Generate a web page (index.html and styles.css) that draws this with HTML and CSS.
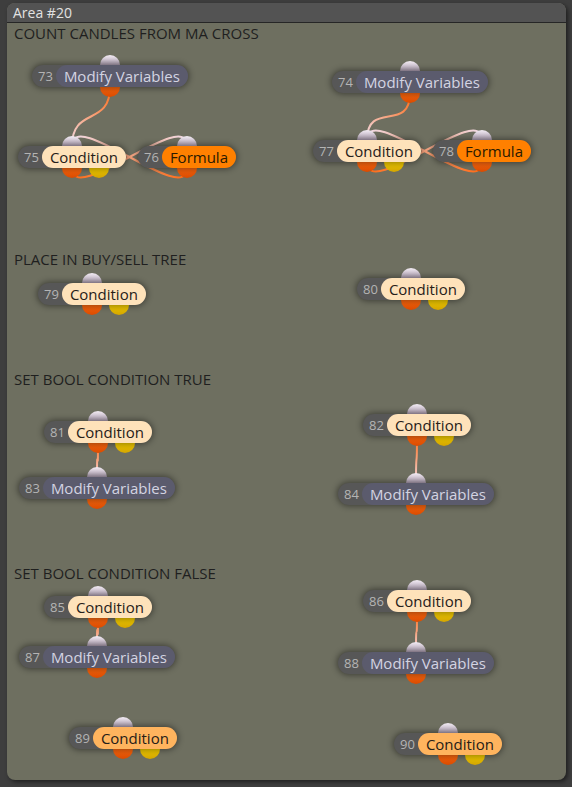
FILE: index.html
```html
<!DOCTYPE html>
<html lang="en">
<head>
  <meta charset="UTF-8">
  <meta name="viewport" content="width=device-width, initial-scale=1.0">
  <title>Area #20</title>
  <link rel="stylesheet" href="styles.css">
</head>
<body>
  <div class="area">
    <div class="area-title">Area #20</div>

    <!-- Node canvas -->
    <div class="canvas" id="canvas">
      <svg class="links" id="links" width="559" height="757"></svg>

      <div class="comment" style="top:0px">COUNT CANDLES FROM MA CROSS</div>
      <div class="comment" style="top:226px">PLACE IN BUY/SELL TREE</div>
      <div class="comment" style="top:346px">SET BOOL CONDITION TRUE</div>
      <div class="comment" style="top:540px">SET BOOL CONDITION FALSE</div>

      <div class="node" data-id="73" style="left:25px;top:42px">
        <div class="pill"><span class="node-id">73</span><span class="node-name modify">Modify Variables</span></div>
        <i class="port in"></i><i class="port out"></i>
      </div>
      <div class="node" data-id="74" style="left:325px;top:48px">
        <div class="pill"><span class="node-id">74</span><span class="node-name modify">Modify Variables</span></div>
        <i class="port in"></i><i class="port out"></i>
      </div>
      <div class="node" data-id="75" style="left:11px;top:123px">
        <div class="pill"><span class="node-id">75</span><span class="node-name condition">Condition</span></div>
        <i class="port in"></i><i class="port out"></i><i class="port out2"></i>
      </div>
      <div class="node" data-id="76" style="left:131px;top:123px">
        <div class="pill"><span class="node-id">76</span><span class="node-name formula">Formula</span></div>
        <i class="port in"></i><i class="port out"></i>
      </div>
      <div class="node" data-id="77" style="left:306px;top:117px">
        <div class="pill"><span class="node-id">77</span><span class="node-name condition">Condition</span></div>
        <i class="port in"></i><i class="port out"></i><i class="port out2"></i>
      </div>
      <div class="node" data-id="78" style="left:426px;top:117px">
        <div class="pill"><span class="node-id">78</span><span class="node-name formula">Formula</span></div>
        <i class="port in"></i><i class="port out"></i>
      </div>

      <div class="node" data-id="79" style="left:31px;top:260px">
        <div class="pill"><span class="node-id">79</span><span class="node-name condition">Condition</span></div>
        <i class="port in"></i><i class="port out"></i><i class="port out2"></i>
      </div>
      <div class="node" data-id="80" style="left:350px;top:255px">
        <div class="pill"><span class="node-id">80</span><span class="node-name condition">Condition</span></div>
        <i class="port in"></i><i class="port out"></i><i class="port out2"></i>
      </div>

      <div class="node" data-id="81" style="left:37px;top:398px">
        <div class="pill"><span class="node-id">81</span><span class="node-name condition">Condition</span></div>
        <i class="port in"></i><i class="port out"></i><i class="port out2"></i>
      </div>
      <div class="node" data-id="82" style="left:356px;top:391px">
        <div class="pill"><span class="node-id">82</span><span class="node-name condition">Condition</span></div>
        <i class="port in"></i><i class="port out"></i><i class="port out2"></i>
      </div>
      <div class="node" data-id="83" style="left:12px;top:454px">
        <div class="pill"><span class="node-id">83</span><span class="node-name modify">Modify Variables</span></div>
        <i class="port in"></i><i class="port out"></i>
      </div>
      <div class="node" data-id="84" style="left:331px;top:460px">
        <div class="pill"><span class="node-id">84</span><span class="node-name modify">Modify Variables</span></div>
        <i class="port in"></i><i class="port out"></i>
      </div>

      <div class="node" data-id="85" style="left:37px;top:573px">
        <div class="pill"><span class="node-id">85</span><span class="node-name condition">Condition</span></div>
        <i class="port in"></i><i class="port out"></i><i class="port out2"></i>
      </div>
      <div class="node" data-id="86" style="left:356px;top:567px">
        <div class="pill"><span class="node-id">86</span><span class="node-name condition">Condition</span></div>
        <i class="port in"></i><i class="port out"></i><i class="port out2"></i>
      </div>
      <div class="node" data-id="87" style="left:12px;top:623px">
        <div class="pill"><span class="node-id">87</span><span class="node-name modify">Modify Variables</span></div>
        <i class="port in"></i><i class="port out"></i>
      </div>
      <div class="node" data-id="88" style="left:331px;top:629px">
        <div class="pill"><span class="node-id">88</span><span class="node-name modify">Modify Variables</span></div>
        <i class="port in"></i><i class="port out"></i>
      </div>

      <div class="node" data-id="89" style="left:62px;top:704px">
        <div class="pill"><span class="node-id">89</span><span class="node-name condition selected">Condition</span></div>
        <i class="port in"></i><i class="port out"></i><i class="port out2"></i>
      </div>
      <div class="node" data-id="90" style="left:387px;top:710px">
        <div class="pill"><span class="node-id">90</span><span class="node-name condition selected">Condition</span></div>
        <i class="port in"></i><i class="port out"></i><i class="port out2"></i>
      </div>
    </div>
  </div>

  <script>
    // output node -> input node
    const links = [
      [73, 75], [75, 76], [76, 75],
      [74, 77], [77, 78], [78, 77],
      [81, 83], [82, 84],
      [85, 87], [86, 88]
    ];
    const svgNS = "http://www.w3.org/2000/svg";
    const svg = document.getElementById("links");
    const defs = document.createElementNS(svgNS, "defs");
    svg.appendChild(defs);

    function nodeBox(id) {
      const el = document.querySelector(`.node[data-id="${id}"]`);
      return {
        x: el.offsetLeft + el.offsetWidth / 2,
        top: el.offsetTop,
        bottom: el.offsetTop + el.offsetHeight
      };
    }

    links.forEach(([from, to], i) => {
      const a = nodeBox(from);
      const b = nodeBox(to);
      const x1 = a.x, y1 = a.bottom, x2 = b.x, y2 = b.top;
      const bend = 40;

      // orange at the output end, lilac at the input end
      const grad = document.createElementNS(svgNS, "linearGradient");
      grad.setAttribute("id", `link${i}`);
      grad.setAttribute("gradientUnits", "userSpaceOnUse");
      grad.setAttribute("x1", x1);
      grad.setAttribute("y1", y1);
      grad.setAttribute("x2", x2);
      grad.setAttribute("y2", y2);
      grad.innerHTML = '<stop offset="0" stop-color="#ff6a14"/><stop offset="1" stop-color="#f0dbe6"/>';
      defs.appendChild(grad);

      const path = document.createElementNS(svgNS, "path");
      path.setAttribute("d", `M ${x1} ${y1} C ${x1} ${y1 + bend}, ${x2} ${y2 - bend}, ${x2} ${y2}`);
      path.setAttribute("stroke", `url(#link${i})`);
      svg.appendChild(path);
    });
  </script>
</body>
</html>
```

FILE: styles.css
```css
body {
  margin: 0;
  padding: 3px 6px 7px 7px;
  background: #3e3e3e;
  font-family: "Open Sans", "Noto Sans", sans-serif;
}

/* Area frame */
.area {
  height: 777px;
  display: flex;
  flex-direction: column;
  background: #6e6f60;
  border-radius: 8px;
  overflow: hidden;
  box-shadow: 2px 2px 4px rgba(0, 0, 0, 0.5);
}

.area-title {
  height: 19px;
  line-height: 19px;
  padding-left: 6px;
  font-size: 14px;
  color: #e2e2e2;
  background: #535353;
  border-bottom: 1px solid #262626;
}

.canvas {
  position: relative;
  flex: 1;
}

.links {
  position: absolute;
  left: 0;
  top: 0;
}

.links path {
  fill: none;
  stroke-width: 2;
}

/* Comments on the canvas */
.comment {
  position: absolute;
  left: 7px;
  font-size: 15px;
  line-height: 20px;
  color: #1f1f1f;
}

/* Nodes */
.node {
  position: absolute;
}

.pill {
  position: relative;
  z-index: 1;
  display: flex;
  align-items: center;
  height: 22px;
  border-radius: 11px;
  background: #575757;
  box-shadow: 0 0 6px 1px rgba(0, 0, 0, 0.45);
  white-space: nowrap;
}

.node-id {
  padding: 0 3px 0 6px;
  font-size: 13px;
  color: #b4b4b4;
}

.node-name {
  height: 22px;
  line-height: 22px;
  padding: 0 8px;
  border-radius: 11px;
  font-size: 15px;
}

.modify {
  background: #5b5b6d;
  color: #d4d4e2;
}

.condition {
  background: #fee2ba;
  color: #262018;
}

.condition.selected {
  background: #ffb45e;
}

.formula {
  background: #ff8000;
  color: #2a1a00;
}

/* Ports */
.port {
  position: absolute;
  left: 50%;
  width: 20px;
  height: 20px;
  margin-left: -10px;
  border-radius: 50%;
}

.port.in {
  top: -10px;
  background: linear-gradient(#f2ebf3 0%, #aa9aae 55%);
}

.port.out {
  bottom: -10px;
  background: linear-gradient(#ff6a10 50%, #d84a00 100%);
}

.port.out2 {
  bottom: -10px;
  margin-left: 17px;
  background: linear-gradient(#f6d000 50%, #d2a400 100%);
}
```
